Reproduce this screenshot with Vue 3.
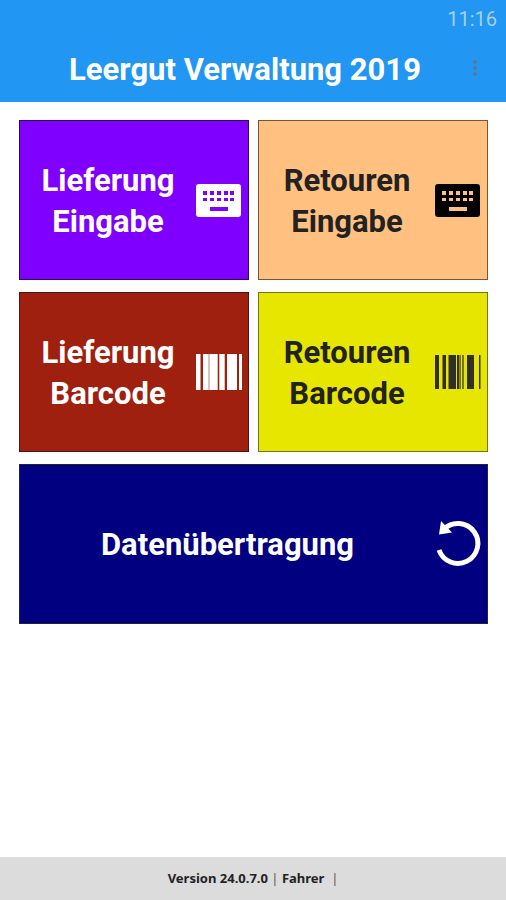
<script setup>
const tiles = [
  { id: 'delivery-input', lines: ['Lieferung', 'Eingabe'], icon: 'keyboard' },
  { id: 'return-input', lines: ['Retouren', 'Eingabe'], icon: 'keyboard' },
  { id: 'delivery-barcode', lines: ['Lieferung', 'Barcode'], icon: 'barcode-light' },
  { id: 'return-barcode', lines: ['Retouren', 'Barcode'], icon: 'barcode-dark' },
  { id: 'transfer', lines: ['Datenübertragung'], icon: 'reload' },
]
const keyColumns = [8, 15, 22, 29, 35]
</script>

<template>
  <div class="app">
    <header class="header">
      <time class="clock">11:16</time>
      <div class="toolbar">
        <h1 class="title">Leergut Verwaltung 2019</h1>
        <button class="menu" type="button" aria-label="Menü">
          <svg viewBox="0 0 6 16" width="6" height="16">
            <circle cx="3" cy="2" r="2" />
            <circle cx="3" cy="8" r="2" />
            <circle cx="3" cy="14" r="2" />
          </svg>
        </button>
      </div>
    </header>

    <main class="tiles">
      <button v-for="tile in tiles" :key="tile.id" type="button" class="tile" :class="tile.id">
        <span class="label">
          <span v-for="line in tile.lines" :key="line" class="line">{{ line }}</span>
        </span>
        <svg class="icon" viewBox="0 0 46 46" aria-hidden="true">
          <g v-if="tile.icon === 'keyboard'">
            <rect class="ink" x="0" y="7" width="45" height="33" rx="3" />
            <template v-for="x in keyColumns" :key="x">
              <rect class="key" :x="x - 1" y="14" width="4" height="4" />
              <rect class="key" :x="x - 1" y="21" width="4" height="3" />
            </template>
            <rect class="key" x="14" y="30" width="18" height="4" />
          </g>
          <g v-else-if="tile.icon === 'barcode-light'">
            <path class="ink" d="M0 5h4.500v36h-4.500zM7 5h5v36h-5zM14 5h7.700v36h-7.700zM23.300 5h5.400v36h-5.400zM31 5h10v36h-10zM43 5h3v36h-3z" />
            <path class="faint" d="M12 5h2v36h-2z" />
          </g>
          <g v-else-if="tile.icon === 'barcode-dark'">
            <path class="ink" d="M0 6h4v34h-4zM7.500 6h3.500v34h-3.500zM13.500 6h7.500v34h-7.500zM22 6h2.500v34h-2.500zM32 6h7v34h-7zM44 6h1.500v34h-1.500z" />
            <path class="soft" d="M25 6h1v34h-1zM27 6h2v34h-2z" />
          </g>
          <g v-else>
            <path class="stroke" d="M4 29A20 20 0 1 0 9 8" />
            <path class="ink" d="M6 0L17 11.500L4 13.500Z" />
          </g>
        </svg>
      </button>
    </main>

    <footer class="footer">
      Version 24.0.7.0 <span class="divider">|</span> Fahrer&nbsp; <span class="divider">|</span>
    </footer>
  </div>
</template>

<style>
body {
  margin: 0;
}
</style>

<style scoped>
.app {
  display: flex;
  flex-direction: column;
  min-height: 100vh;
  background: #fff;
  font-family: Roboto, "Liberation Sans", sans-serif;
}
.header {
  background: #2196f3;
  padding-bottom: 4px;
}
.clock {
  display: block;
  padding: 6px 9px 10px 0;
  text-align: right;
  font-size: 20px;
  line-height: 26px;
  color: #a9cfe0;
}
.toolbar {
  display: flex;
  align-items: center;
  padding: 0 23px;
}
.title {
  flex: 1;
  margin: 0;
  text-align: center;
  font-size: 31px;
  line-height: 56px;
  font-weight: 700;
  color: #fff;
}
.menu {
  display: flex;
  justify-content: center;
  width: 16px;
  padding: 12px 0 16px;
  border: 0;
  background: none;
  fill: #56799b;
}
.tiles {
  display: grid;
  grid-template-columns: 1fr 1fr;
  gap: 12px 9px;
  padding: 18px 18px 18px 19px;
}
.tile {
  display: flex;
  align-items: center;
  min-height: 160px;
  padding: 0 6px 0 0;
  border: 1px solid #333;
  border-radius: 0;
  font-family: inherit;
  font-size: 31px;
  font-weight: 700;
  line-height: 41px;
  color: #fff;
}
.label {
  flex: 1;
  padding-top: 2px;
}
.transfer .label {
  padding-top: 0;
}
.line {
  display: block;
}
.icon {
  flex: none;
  width: 46px;
  height: 46px;
  overflow: visible;
}
.ink {
  fill: #fff;
}
.faint {
  fill: #d8c4c4;
}
.stroke {
  fill: none;
  stroke: #fff;
  stroke-width: 5;
}
.delivery-input {
  background: #8000ff;
  border-color: #2b0a60;
}
.delivery-input .key {
  fill: #8000ff;
}
.return-input {
  background: #ffc080;
  border-color: #7a5234;
  color: #222;
}
.return-input .ink {
  fill: #000;
}
.return-input .key {
  fill: #ffc080;
}
.delivery-barcode {
  background: #a02010;
  border-color: #4a1512;
}
.return-barcode {
  background: #e6e600;
  border-color: #74741c;
  color: #222;
}
.return-barcode .ink {
  fill: #303028;
}
.return-barcode .soft {
  fill: #77771a;
}
.transfer {
  grid-column: 1 / -1;
  background: #000080;
  border-color: #202040;
}
.footer {
  margin-top: auto;
  background: #dcdcdc;
  text-align: center;
  font-family: "Noto Sans", sans-serif;
  font-size: 13px;
  font-weight: 700;
  line-height: 43px;
  color: #222;
}
.divider {
  font-weight: 400;
  color: #555;
}
</style>
